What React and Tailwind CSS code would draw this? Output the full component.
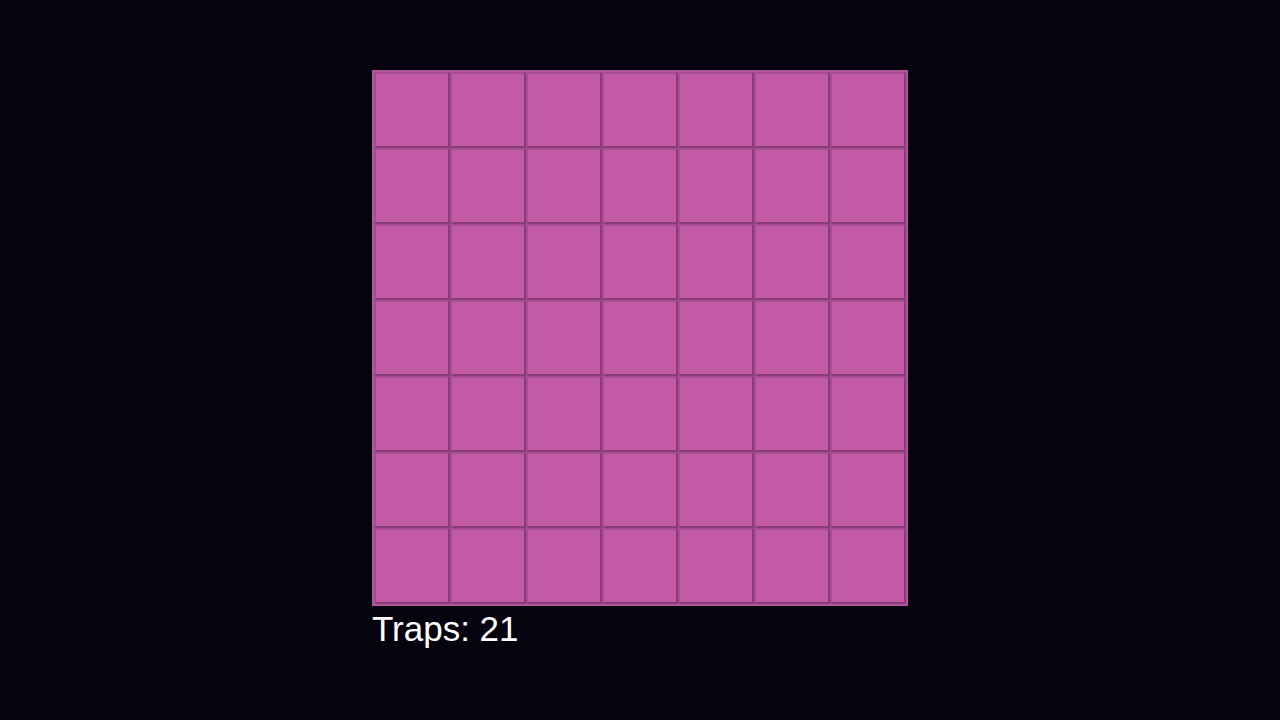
export default function App() {
  const cells = Array.from({ length: 49 });
  return (
    <div className="min-h-screen w-full bg-[#04030f] pt-[70px]" style={{ fontFamily: '"Liberation Sans", Arial, sans-serif' }}>
      <div className="mx-auto w-[536px]">
        <div className="grid grid-cols-7 border-2 border-[#b0579c] bg-[#c25aa6]">
          {cells.map((_, i) => (
            <div
              key={i}
              className="h-[76px] w-[76px] border-2 border-t-[#a84d94] border-l-[#a84d94] border-r-[#8a3b79] border-b-[#8a3b79] bg-[#c35aa6]"
            />
          ))}
        </div>
        <div className="mt-[3px] text-[35px] leading-[40px] text-white">Traps: 21</div>
      </div>
    </div>
  );
}
